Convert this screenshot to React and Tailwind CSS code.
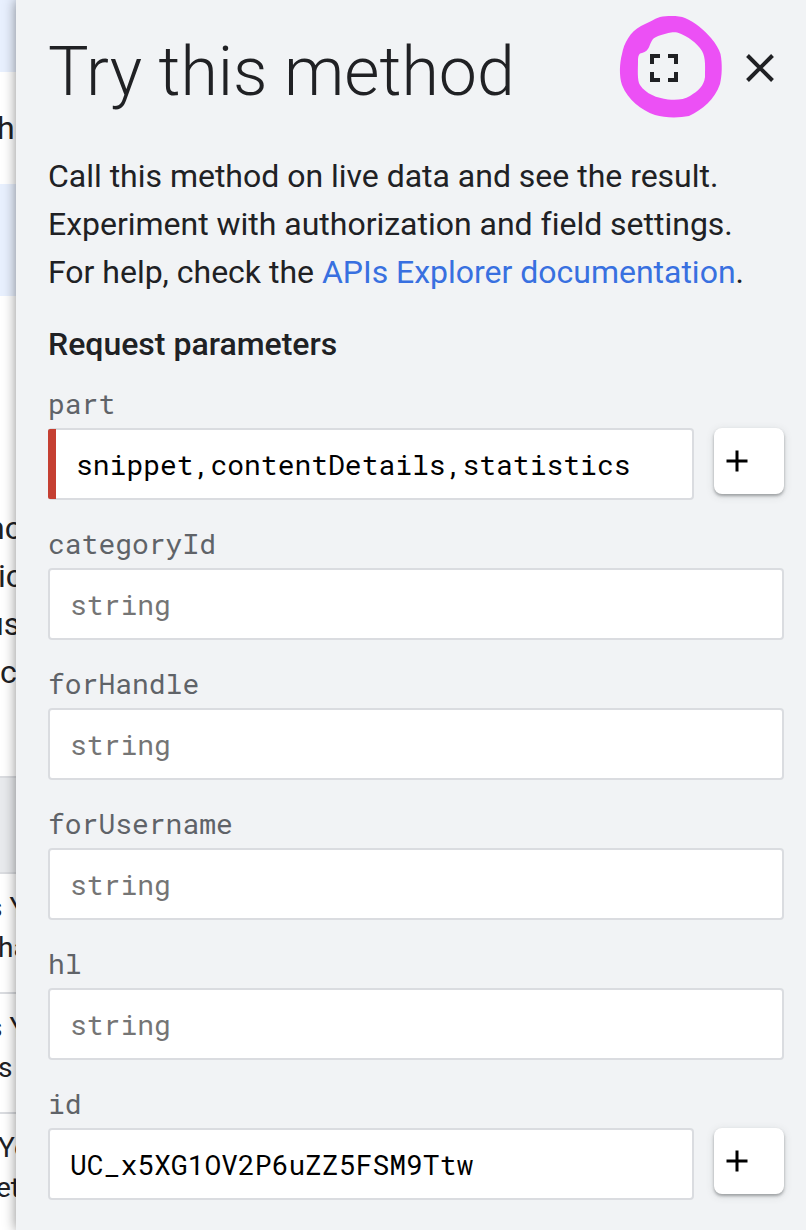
function PlusButton() {
  return (
    <button
      aria-label="Add"
      className="flex h-[66px] w-[70px] shrink-0 items-center rounded-lg bg-white pl-[12px] shadow-[0_2px_3px_rgba(60,64,67,0.4),0_2px_8px_rgba(60,64,67,0.15)]"
    >
      <svg width="22" height="22" viewBox="0 0 22 22" fill="none" stroke="#000" strokeWidth="3">
        <path d="M0.5 11H21.5M11 0.5V21.5" />
      </svg>
    </button>
  );
}

function Field({ name, value, required, repeatable }) {
  return (
    <div className="h-[140px]">
      <div className="flex h-[48px] items-center font-['Roboto_Mono','DejaVu_Sans_Mono',monospace] text-[28px] text-[#5f6368]">
        {name}
      </div>
      <div className="flex items-start gap-5">
        <div className="flex h-[72px] flex-1 rounded-[4px] border-2 border-[#dadce0] bg-white data-[required=true]:border-l-0" data-required={!!required}>
          {required && <div className="-my-px w-2 shrink-0 rounded-l-[2px] bg-[#c53f32]" />}
          <div
            className={
              "flex items-center pl-[20px] pt-[2px] font-['Roboto_Mono','DejaVu_Sans_Mono',monospace] text-[28px] " +
              (value ? "text-black" : "text-[#757575]")
            }
          >
            {value || "string"}
          </div>
        </div>
        {repeatable && <PlusButton />}
      </div>
    </div>
  );
}

const fields = [
  { name: "part", value: "snippet,contentDetails,statistics", required: true, repeatable: true },
  { name: "categoryId" },
  { name: "forHandle" },
  { name: "forUsername" },
  { name: "hl" },
  { name: "id", value: "UC_x5XG1OV2P6uZZ5FSM9Ttw", repeatable: true },
];

function PageBehind() {
  return (
    <div className="h-full w-4 shrink-0 overflow-hidden whitespace-nowrap bg-white text-[32px] leading-[48px] text-[#202124]">
      <div className="h-[72px] bg-[#e8f0fe]" />
      <div className="h-[112px] pt-[32px]">
        <div className="-ml-[3px]">h</div>
      </div>
      <div className="h-[112px] bg-[#e8f0fe]" />
      <div className="h-[480px] pt-[208px]">
        <div className="-ml-[13px]">nc</div>
        <div className="-ml-[2px]">ic</div>
        <div className="-ml-[14px]">us</div>
        <div>c</div>
      </div>
      <div className="h-[98px] border-y-2 border-[#dadce0] bg-[#e8eaed]" />
      <div className="text-[28px] leading-[40px]">
        <div className="h-[120px] border-b-2 border-[#dadce0] pt-[14px]">
          <div className="-ml-[12px]">s Y</div>
          <div className="-ml-[2px]">ha</div>
        </div>
        <div className="h-[120px] border-b-2 border-[#dadce0] pt-[14px]">
          <div className="-ml-[12px]">s Y</div>
          <div className="-ml-[2px]">s</div>
        </div>
        <div className="pt-[14px]">
          <div className="-ml-[2px]">Yo</div>
          <div className="-ml-[4px]">et</div>
        </div>
      </div>
    </div>
  );
}

export default function App() {
  return (
    <div className="flex h-[1230px] w-[806px] overflow-hidden font-[Roboto,sans-serif]">
      <PageBehind />
      <aside className="relative h-full flex-1 bg-[#f1f3f5] pl-8 pr-[22px] text-[#202124] shadow-[0_0_12px_rgba(0,0,0,0.45)]">
        <header className="flex h-[152px]">
          <h1 className="flex-1 whitespace-nowrap pt-[32px] text-[68px] font-light leading-[80px]">
            Try this method
          </h1>
          <svg className="mr-[-3px] mt-[10px] shrink-0" width="173" height="112" viewBox="614 10 173 112" fill="none">
            <path
              fill="#ec50f5"
              fillRule="evenodd"
              d="M660 17C668 15.500 679 15.500 685 18C695 22 704 30 711 38C716 44 719 49 720.500 54C722.500 64 722 76 720 84C715 99 702 110 689 116C679 118 665 118 655 115C641 110 628 100 622 85C619 76 619.500 63 622 54C624 43 630 32 641 26C648 23 654 19 660 17ZM671 32.500C664 34 656 36 653 39C649 44 650 51 642 53C639 53 638 56 638 61C638 70 637 80 640 85C646 94 657 98 668 99.500C676 100 684 100 690 96C698 91 704 86 705 77C705 68 706 58 702 51C697 43 687 36 680 33.500C677 32 674 32 671 32.500Z"
            />
            <path stroke="#202124" strokeWidth="4" d="M652 64V56H660M668 56H676V64M676 72V80H668M660 80H652V72" />
            <path stroke="#202124" strokeWidth="4" d="M747.500 55.500L772.500 80.500M772.500 55.500L747.500 80.500" />
          </svg>
        </header>
        <p className="whitespace-nowrap text-[32px] leading-[48px] tracking-[-0.015px]">
          Call this method on live data and see the result.
          <br />
          Experiment with authorization and field settings.
          <br />
          For help, check the <a className="text-[#3870e0]">APIs Explorer documentation</a>.
        </p>
        <h2 className="mt-6 text-[32px] font-medium leading-[48px]">Request parameters</h2>
        <div className="mt-[12px]">
          {fields.map((f) => (
            <Field key={f.name} {...f} />
          ))}
        </div>
      </aside>
    </div>
  );
}
